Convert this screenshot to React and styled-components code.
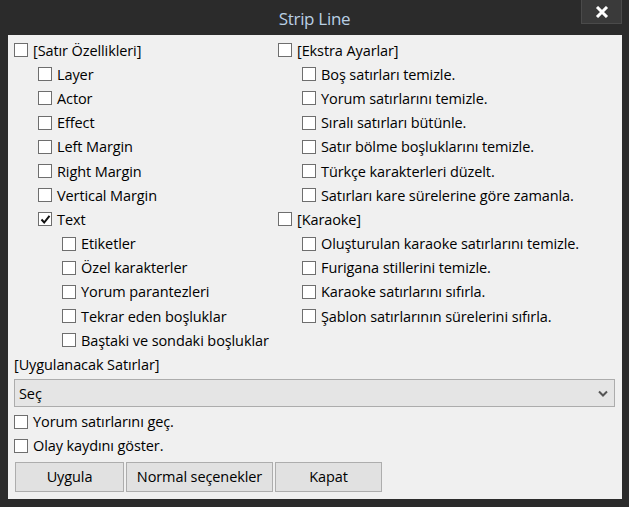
import React, { useState } from "react";
import styled, { createGlobalStyle } from "styled-components";

const GlobalStyle = createGlobalStyle`
  html, body {
    margin: 0;
    padding: 0;
    background: #2b2b2b;
  }
  * {
    box-sizing: border-box;
  }
`;

const leftItems = [
  { label: "[Satır Özellikleri]", level: 0 },
  { label: "Layer", level: 1 },
  { label: "Actor", level: 1 },
  { label: "Effect", level: 1 },
  { label: "Left Margin", level: 1 },
  { label: "Right Margin", level: 1 },
  { label: "Vertical Margin", level: 1 },
  { label: "Text", level: 1, checked: true },
  { label: "Etiketler", level: 2 },
  { label: "Özel karakterler", level: 2 },
  { label: "Yorum parantezleri", level: 2 },
  { label: "Tekrar eden boşluklar", level: 2 },
  { label: "Baştaki ve sondaki boşluklar", level: 2 },
];

const rightItems = [
  { label: "[Ekstra Ayarlar]", level: 0 },
  { label: "Boş satırları temizle.", level: 1 },
  { label: "Yorum satırlarını temizle.", level: 1 },
  { label: "Sıralı satırları bütünle.", level: 1 },
  { label: "Satır bölme boşluklarını temizle.", level: 1 },
  { label: "Türkçe karakterleri düzelt.", level: 1 },
  { label: "Satırları kare sürelerine göre zamanla.", level: 1 },
  { label: "[Karaoke]", level: 0 },
  { label: "Oluşturulan karaoke satırlarını temizle.", level: 1 },
  { label: "Furigana stillerini temizle.", level: 1 },
  { label: "Karaoke satırlarını sıfırla.", level: 1 },
  { label: "Şablon satırlarının sürelerini sıfırla.", level: 1 },
];

const CheckRow = ({ label, level = 0, checked }) => {
  const [on, setOn] = useState(!!checked);
  return (
    <Row $level={level} onClick={() => setOn(!on)}>
      <Box>
        {on ? (
          <svg width="11" height="11" viewBox="0 0 11 11">
            <path d="M1.5 5.5 L4.2 8.5 L9.5 1.8" fill="none" stroke="#111" strokeWidth="2" />
          </svg>
        ) : null}
      </Box>
      <RowLabel>{label}</RowLabel>
    </Row>
  );
};

const App = () => {
  return (
    <Window>
      <GlobalStyle />
      <TitleBar>
        <Title>Strip Line</Title>
        <CloseButton>
          <svg width="14" height="12" viewBox="0 0 14 12">
            <path d="M2 1 L12 11 M12 1 L2 11" stroke="#fff" strokeWidth="3" />
          </svg>
        </CloseButton>
      </TitleBar>

      <Panel>
        <Columns>
          <Column>
            {leftItems.map((item) => (
              <CheckRow key={item.label} {...item} />
            ))}
          </Column>
          <Column>
            {rightItems.map((item) => (
              <CheckRow key={item.label} {...item} />
            ))}
          </Column>
        </Columns>

        <SectionLabel>[Uygulanacak Satırlar]</SectionLabel>
        <Select>
          <span>Seç</span>
          <svg width="10" height="7" viewBox="0 0 10 7">
            <path d="M1 1.5 L5 5.5 L9 1.5" fill="none" stroke="#555" strokeWidth="2" />
          </svg>
        </Select>

        <BottomChecks>
          <CheckRow label="Yorum satırlarını geç." />
          <CheckRow label="Olay kaydını göster." />
        </BottomChecks>

        <Buttons>
          <Button $w={109}>Uygula</Button>
          <Button $w={147}>Normal seçenekler</Button>
          <Button $w={107}>Kapat</Button>
        </Buttons>
      </Panel>
    </Window>
  );
};

export default App;

const Window = styled.div`
  width: 629px;
  height: 507px;
  background: #2b2b2b;
  display: flex;
  flex-direction: column;
  font-family: "Open Sans", "Noto Sans", sans-serif;
`;

const TitleBar = styled.div`
  height: 35px;
  position: relative;
  display: flex;
  align-items: center;
  justify-content: center;
`;

const Title = styled.div`
  color: #b9cfe4;
  font-size: 17px;
  margin-top: 2px;
  letter-spacing: -0.3px;
`;

const CloseButton = styled.div`
  position: absolute;
  top: 0;
  right: 7px;
  width: 41px;
  height: 24px;
  background: #3a3a3a;
  border: 1px solid #4a4a4a;
  border-top: none;
  display: flex;
  align-items: center;
  justify-content: center;
`;

const Panel = styled.div`
  margin: 0 7px 0 8px;
  height: 464px;
  background: #f0f0f0;
  padding: 3px 9px 0 6px;
  display: flex;
  flex-direction: column;
`;

const Columns = styled.div`
  display: grid;
  grid-template-columns: 264px 1fr;
`;

const Column = styled.div`
  display: flex;
  flex-direction: column;
`;

const Row = styled.div`
  height: 24.2px;
  display: flex;
  align-items: center;
  padding-left: ${(p) => p.$level * 24}px;
  cursor: default;
`;

const Box = styled.div`
  width: 14px;
  height: 14px;
  background: #fff;
  border: 1px solid #6e6e6e;
  display: flex;
  align-items: center;
  justify-content: center;
  flex: none;
`;

const RowLabel = styled.span`
  margin-left: 5px;
  font-size: 14.5px;
  color: #000;
  letter-spacing: -0.1px;
  white-space: nowrap;
`;

const SectionLabel = styled.div`
  height: 24px;
  display: flex;
  align-items: center;
  font-size: 14.5px;
  letter-spacing: -0.1px;
  color: #000;
`;

const Select = styled.div`
  margin-top: 3px;
  width: 601px;
  height: 28px;
  background: #e5e5e5;
  border: 1px solid #acacac;
  display: flex;
  align-items: center;
  justify-content: space-between;
  padding: 0 6px 0 4px;
  font-size: 14.5px;
  letter-spacing: -0.1px;
  color: #000;
`;

const BottomChecks = styled.div`
  margin-top: 2px;
  display: flex;
  flex-direction: column;
`;

const Buttons = styled.div`
  margin-top: 4px;
  display: flex;
  gap: 2px;
  padding-left: 1px;
`;

const Button = styled.div`
  width: ${(p) => p.$w}px;
  height: 30px;
  background: #e1e1e1;
  border: 1px solid #adadad;
  display: flex;
  align-items: center;
  justify-content: center;
  font-size: 14.5px;
  letter-spacing: -0.1px;
  color: #000;
`;
